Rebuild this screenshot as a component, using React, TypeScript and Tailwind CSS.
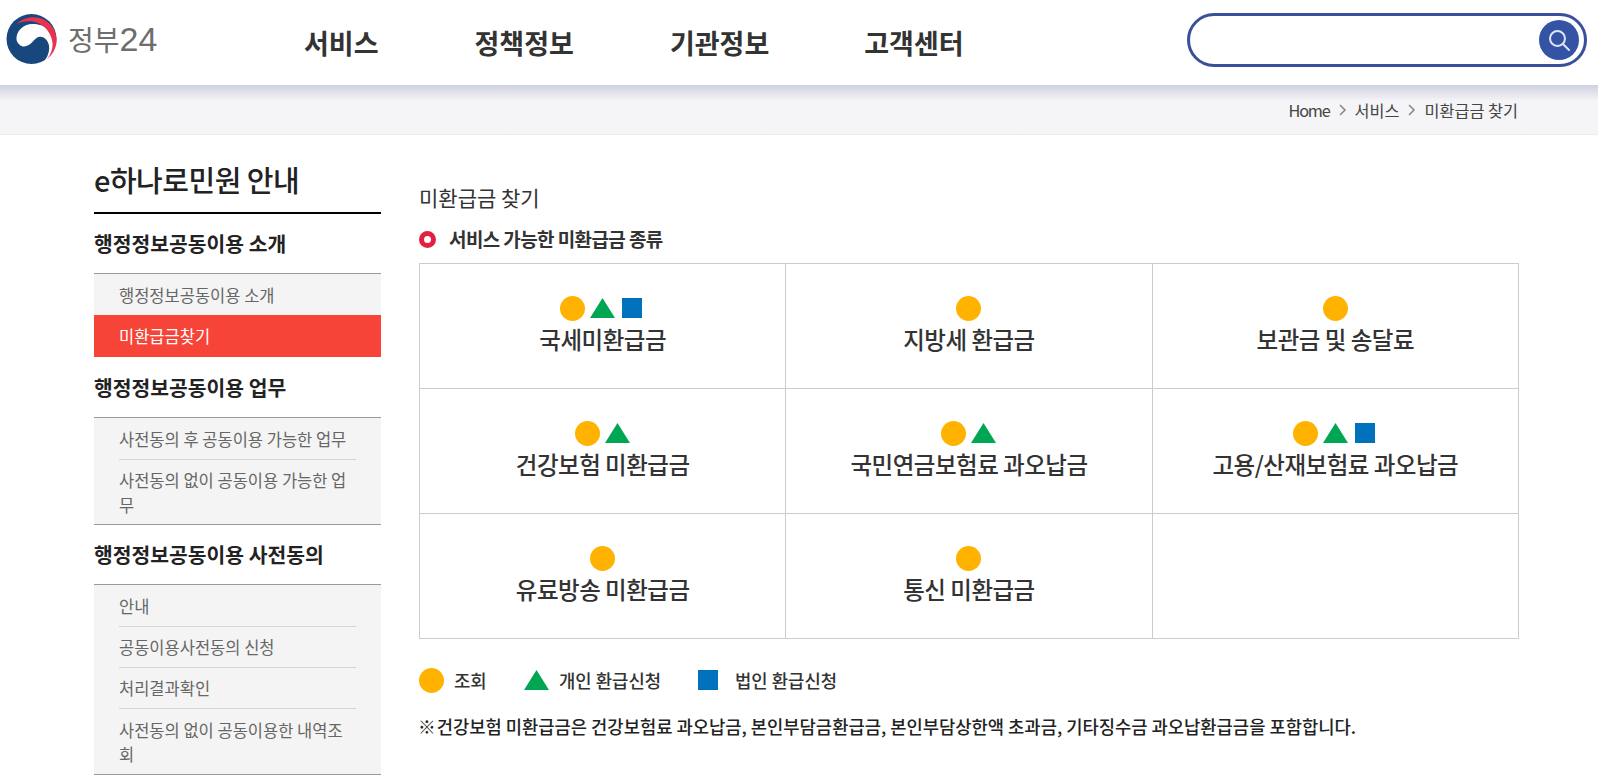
import React from 'react';

const Circle = () => (
  <svg width="25" height="25" viewBox="0 0 25 25" className="shrink-0">
    <circle cx="12.5" cy="12.5" r="12.5" fill="#ffb300" />
  </svg>
);

const Triangle = () => (
  <svg width="25" height="20" viewBox="0 0 25 20" className="shrink-0">
    <polygon points="12.5,0 25,20 0,20" fill="#00a651" />
  </svg>
);

const Square = () => (
  <svg width="20" height="20" viewBox="0 0 20 20" className="shrink-0">
    <rect width="20" height="20" fill="#0071bc" />
  </svg>
);

const Logo = () => (
  <svg width="51" height="50" viewBox="0 0 150 150" className="shrink-0">
    <circle cx="75" cy="75" r="75" fill="#17477c" />
    <path d="M30 77C28 52 50 30 78 30C112 30 150 50 150 85C150 110 135 128 112 142C122 132 131 112 127 92C122 74 108 65 96 69C82 74 76 93 57 97C44 99 33 90 30 77Z" fill="#fff" />
    <path d="M30 30C50 8 90 3 115 18C140 33 152 60 150 85C148 105 138 122 122 135C135 118 141 100 137 80C131 50 105 25 75 22C58 21 42 24 30 30Z" fill="#e8334f" />
  </svg>
);

const Chevron = () => (
  <svg width="9" height="12" viewBox="0 0 9 12" fill="none" stroke="#8a8a8a" strokeWidth="1.6" className="mx-[8px] shrink-0">
    <path d="M2 1l5 5-5 5" />
  </svg>
);

const cells: { name: string; marks: string[] }[] = [
  { name: '국세미환급금', marks: ['c', 't', 's'] },
  { name: '지방세 환급금', marks: ['c'] },
  { name: '보관금 및 송달료', marks: ['c'] },
  { name: '건강보험 미환급금', marks: ['c', 't'] },
  { name: '국민연금보험료 과오납금', marks: ['c', 't'] },
  { name: '고용/산재보험료 과오납금', marks: ['c', 't', 's'] },
  { name: '유료방송 미환급금', marks: ['c'] },
  { name: '통신 미환급금', marks: ['c'] },
  { name: '', marks: [] },
];

const SideTitle = ({ children, h }: { children: React.ReactNode; h: string }) => (
  <div className={`${h} flex items-center text-[20.4px] font-bold text-[#222]`}>{children}</div>
);

const SideItem = ({ children, line }: { children: React.ReactNode; line?: string }) => (
  <li className={`px-[25px] ${line === 'end' ? 'border-b border-[#999]' : ''}`}>
    <div className={`pt-[8.5px] pb-[7.25px] text-[16.5px] leading-[24.5px] text-[#666] ${line === 'end' ? '' : line === 'none' ? 'border-b border-transparent' : 'border-b border-[#d5d5d5]'}`}>{children}</div>
  </li>
);

export default function App() {
  return (
    <div className="h-[776px] overflow-hidden bg-white font-['Noto_Sans_CJK_KR','Noto_Sans',sans-serif] text-[#222]">
      {/* header */}
      <header className="relative z-10 h-[85px] bg-white flex items-center">
        <div className="w-[304px] pl-[6px] flex items-center gap-[11px] -mt-[7px]">
          <Logo />
          <span className="text-[#6e6e6e] flex items-baseline">
            <span className="text-[28px] leading-none">정부</span>
            <span className="text-[34px] leading-none font-['Liberation_Sans',sans-serif]">24</span>
          </span>
        </div>
        <nav className="flex gap-[96px] text-[27px] font-bold text-[#333] mt-[2px]">
          <a>서비스</a>
          <a>정책정보</a>
          <a>기관정보</a>
          <a className="-ml-[1px]">고객센터</a>
        </nav>
        <div className="ml-auto mr-[11px] w-[400px] h-[54px] rounded-full border-[3px] border-[#3a5199] flex items-center justify-end pr-[5px] -mt-[5px]">
          <button className="w-[40px] h-[40px] rounded-full bg-[#3453a4] flex items-center justify-center">
            <svg width="24" height="24" viewBox="0 0 24 24" fill="none" stroke="#dfe6f5" strokeWidth="2">
              <circle cx="10.5" cy="10.5" r="7.5" />
              <path d="M16 16l6 6" strokeLinecap="round" />
            </svg>
          </button>
        </div>
      </header>

      {/* breadcrumb */}
      <div className="h-[50px] border-b border-[#ececec] bg-gradient-to-b from-[#ced1e2] via-[#f5f4f6] via-[32%] to-[#f5f4f6] flex items-center justify-end pr-[80px] text-[16.3px] text-[#444] pt-[1px]">
        <span className="tracking-[-1.2px]">Home</span>
        <Chevron />
        <span>서비스</span>
        <Chevron />
        <span>미환급금 찾기</span>
      </div>

      <div className="flex pl-[94px]">
        {/* sidebar */}
        <aside className="w-[287px] shrink-0">
          <h2 className="h-[79px] pt-[22px] border-b-2 border-black text-[29px] leading-[44px] font-medium tracking-[-0.5px] text-[#222]">e하나로민원 안내</h2>
          <SideTitle h="h-[59px]">행정정보공동이용 소개</SideTitle>
          <ul className="bg-[#f4f4f4] border-t border-[#999]">
            <SideItem line="none">행정정보공동이용 소개</SideItem>
            <li className="bg-[#f64538] px-[25px] h-[42px] flex items-center text-[16.5px] text-white">미환급금찾기</li>
          </ul>
          <SideTitle h="h-[60px]">행정정보공동이용 업무</SideTitle>
          <ul className="bg-[#f4f4f4] border-t border-[#999]">
            <SideItem>사전동의 후 공동이용 가능한 업무</SideItem>
            <SideItem line="end">사전동의 없이 공동이용 가능한 업무</SideItem>
          </ul>
          <SideTitle h="h-[59px]">행정정보공동이용 사전동의</SideTitle>
          <ul className="bg-[#f4f4f4] border-t border-[#999]">
            <SideItem>안내</SideItem>
            <SideItem>공동이용사전동의 신청</SideItem>
            <SideItem>처리결과확인</SideItem>
            <SideItem line="end">사전동의 없이 공동이용한 내역조회</SideItem>
          </ul>
        </aside>

        {/* main */}
        <main className="ml-[38px] w-[1100px]">
          <h3 className="mt-[46px] text-[21px] leading-[32px] text-[#333]">미환급금 찾기</h3>
          <div className="mt-[11px] h-[30px] flex items-center gap-[13px] text-[19px] font-bold tracking-[-0.6px] text-[#333]">
            <span className="w-[17px] h-[17px] rounded-full border-[5px] border-[#e3203f] bg-white" />
            서비스 가능한 미환급금 종류
          </div>
          <div className="mt-[9px] grid grid-cols-3 border-l border-t border-[#ccc]">
            {cells.map((c, i) => (
              <div key={i} className="h-[125px] border-r border-b border-[#ccc] flex flex-col items-center pt-[31px]">
                <div className="h-[26px] flex items-center gap-[5px]">
                  {c.marks.map((m) =>
                    m === 'c' ? (
                      <Circle key={m} />
                    ) : m === 't' ? (
                      <Triangle key={m} />
                    ) : (
                      <span key={m} className="ml-[2px] mr-[3px]">
                        <Square />
                      </span>
                    )
                  )}
                </div>
                <div className="mt-[1px] text-[23.5px] leading-[34px] font-medium tracking-[-0.5px] text-[#333]">{c.name}</div>
              </div>
            ))}
          </div>
          <div className="mt-[28px] h-[26px] flex items-center text-[17.8px] font-medium text-[#333]">
            <Circle />
            <span className="ml-[10px] w-[70px]">조회</span>
            <Triangle />
            <span className="ml-[10px] w-[139px]">개인 환급신청</span>
            <Square />
            <span className="ml-[17px]">법인 환급신청</span>
          </div>
          <p className="mt-[21px] text-[17.7px] leading-[24px] font-medium text-[#222] whitespace-nowrap">
            <span className="-ml-[1px] mr-[-3px]">※</span> 건강보험 미환급금은 건강보험료 과오납금, 본인부담금환급금, 본인부담상한액 초과금, 기타징수금 과오납환급금을 포함합니다.
          </p>
        </main>
      </div>
    </div>
  );
}
